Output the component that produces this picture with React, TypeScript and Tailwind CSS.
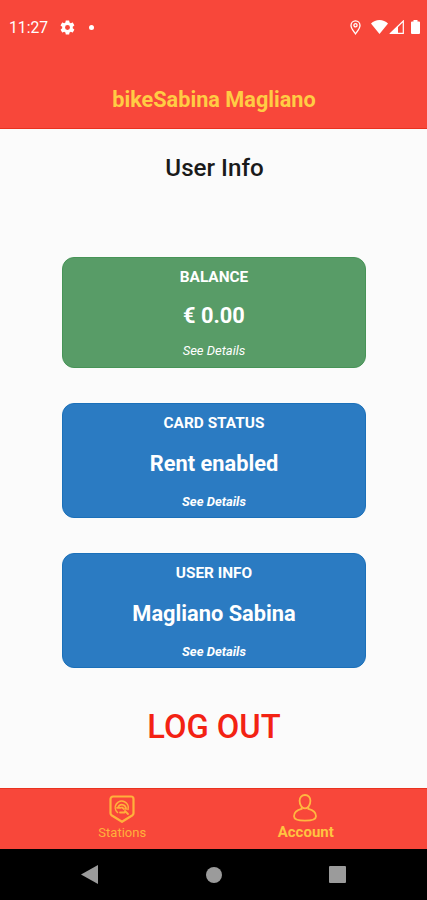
import React from 'react';

interface InfoCardProps {
  label: string;
  value: string;
  variant: 'balance' | 'info';
}

const CARD_STYLES = {
  balance: {
    box: 'h-[111px] bg-[#589c67] border-[#479457]',
    value: 'mt-4',
    details: 'mt-[14px] font-normal',
  },
  info: {
    box: 'h-[115px] bg-[#2b7bc2] border-[#1b70b9]',
    value: 'mt-[18px]',
    details: 'mt-[17px] font-bold',
  },
};

const InfoCard: React.FC<InfoCardProps> = ({ label, value, variant }) => {
  const styles = CARD_STYLES[variant];

  return (
    <button className={`flex w-[304px] flex-col items-center rounded-xl border pt-[9px] text-white ${styles.box}`}>
      <span className="text-[15.4px] leading-5 font-bold">{label}</span>
      <span className={`text-[21.8px] leading-[26px] font-bold ${styles.value}`}>{value}</span>
      <span className={`text-[13px] leading-4 italic ${styles.details}`}>See Details</span>
    </button>
  );
};

const StatusBar: React.FC = () => (
  <div className="flex h-[55px] items-center pl-[9px] pr-[7px] text-white">
    <span className="pt-px text-[15.7px]">11:27</span>
    <svg className="mb-px ml-[11px]" width="17" height="17" viewBox="0 0 24 24" fill="currentColor">
      <path d="M19.4 13c.04-.32.06-.66.06-1s-.02-.68-.07-1l2.1-1.65c.2-.15.25-.42.13-.64l-2-3.46c-.12-.22-.39-.3-.61-.22l-2.49 1a7.3 7.3 0 0 0-1.69-.98l-.38-2.65A.5.5 0 0 0 13.96 2h-4c-.25 0-.46.18-.49.42l-.38 2.65c-.61.25-1.17.59-1.69.98l-2.49-1c-.23-.09-.49 0-.61.22l-2 3.46c-.13.22-.07.49.12.64L4.53 11a8 8 0 0 0 0 2l-2.11 1.65c-.19.15-.24.42-.12.64l2 3.46c.12.22.39.3.61.22l2.49-1c.52.4 1.08.73 1.69.98l.38 2.65c.03.24.24.4.49.4h4c.25 0 .46-.16.49-.4l.38-2.65a7.3 7.3 0 0 0 1.69-.98l2.49 1c.23.09.49 0 .61-.22l2-3.46c.12-.22.07-.49-.12-.64zM12 15.500a3.500 3.500 0 1 1 0-7 3.500 3.500 0 0 1 0 7z" />
    </svg>
    <span className="ml-[13px] h-[5px] w-[5px] rounded-full bg-white" />
    <div className="mb-px ml-auto flex items-center">
      <svg width="11" height="15" viewBox="0 0 11 15" fill="none" stroke="currentColor" strokeWidth="1.3">
        <path d="M5.5 13.8C3.4 11 1 8.200 1 5.400a4.500 4.500 0 0 1 9 0C10 8.200 7.600 11 5.500 13.800z" />
        <circle cx="5.5" cy="5.3" r="1.6" />
      </svg>
      <svg className="ml-[10px]" width="17" height="14" viewBox="0 0 17 14" fill="currentColor">
        <path d="M8.500 14 0 3.500C2.300 1.300 5.200 0 8.500 0S14.700 1.300 17 3.500z" />
      </svg>
      <svg className="ml-px" width="15" height="14" viewBox="0 0 15 14">
        <path d="M1.700 13.300 14.300 1v12.300z" fill="none" stroke="currentColor" strokeWidth="1.200" />
        <path d="M1 13.500 9 5.700v7.800z" fill="currentColor" />
      </svg>
      <svg className="ml-[7px]" width="9" height="14" viewBox="0 0 9 14" fill="currentColor">
        <path d="M2.500 0h4v1.500H8a1 1 0 0 1 1 1V13a1 1 0 0 1-1 1H1a1 1 0 0 1-1-1V2.500a1 1 0 0 1 1-1h1.500z" />
      </svg>
    </div>
  </div>
);

const StationsIcon: React.FC = () => (
  <svg width="26" height="28" viewBox="0 0 26 28" fill="none" stroke="currentColor" strokeLinecap="round" strokeLinejoin="round">
    <path d="M4 1.500h18a2.500 2.500 0 0 1 2.500 2.500v14.200c0 .8-.4 1.500-1 2L13 26.800 2.500 20.200c-.6-.5-1-1.200-1-2V4A2.500 2.500 0 0 1 4 1.500z" strokeWidth="2.200" />
    <path d="M8.500 17.500A6.500 6.500 0 1 1 19 14.500" strokeWidth="1.600" />
    <path d="M9 12.500c1-2.800 3.500-3.500 5.500-2.500 1.500.7 2.500 2 2.500 4M8 12.800h3.500M13 12.500l2 1.500M11 17.500h4.500M16 16l3 3" strokeWidth="1.800" />
  </svg>
);

const AccountIcon: React.FC = () => (
  <svg width="24" height="28" viewBox="0 0 24 28" fill="none" stroke="currentColor" strokeWidth="1.800">
    <path d="M12 1C8.800 1 6.600 3.400 6.600 6.700c0 4 2.200 7.600 5.400 7.600s5.400-3.600 5.400-7.600C17.400 3.400 15.200 1 12 1z" />
    <path d="M8.700 13v1.800C4.500 15.800 1 18.200 1 22.200c0 3.300 4.800 4.500 11 4.500s11-1.200 11-4.500c0-4-3.500-6.400-7.700-7.400V13" />
  </svg>
);

const App: React.FC = () => {
  return (
    <div className="flex h-[900px] w-[427px] flex-col overflow-hidden bg-[#fbfbfb] font-[Roboto,sans-serif]">
      <header className="flex h-[129px] flex-col border-b border-[#e9321f] bg-[#f8473a]">
        <StatusBar />
        <h1 className="mt-[31px] pl-px text-center text-[21.7px] leading-7 font-bold text-[#ffcc44]">bikeSabina Magliano</h1>
      </header>

      <main className="flex flex-1 flex-col items-center pl-px">
        <h2 className="mt-[23px] pl-px text-[24.2px] leading-8 font-medium text-[#1a1a1a]">User Info</h2>
        <div className="mt-[73px] flex flex-col gap-[35px]">
          <InfoCard label="BALANCE" value="€ 0.00" variant="balance" />
          <InfoCard label="CARD STATUS" value="Rent enabled" variant="info" />
          <InfoCard label="USER INFO" value="Magliano Sabina" variant="info" />
        </div>
        <button className="mt-[39px] text-[32.7px] leading-10 font-medium text-[#f32213]">LOG OUT</button>
      </main>

      <nav className="flex h-[61px] justify-around border-t border-[#e9321f] bg-[#f8473a] px-[30px] text-[#ffb13b]">
        <button className="flex w-[100px] flex-col items-center pt-[6px]">
          <StationsIcon />
          <span className="pl-px text-[13px] leading-5">Stations</span>
        </button>
        <button className="flex w-[100px] flex-col items-center pt-[5px] text-[#ffb840]">
          <AccountIcon />
          <span className="pl-px text-[15px] leading-5 font-bold text-[#ffc341]">Account</span>
        </button>
      </nav>

      <div className="flex h-[51px] items-center justify-between bg-black pl-[81px] pr-[81px] text-[#9b9b9b]">
        <svg width="17" height="19" viewBox="0 0 17 19" fill="currentColor">
          <path d="M0 9.500 17 0v19z" />
        </svg>
        <span className="h-4 w-4 rounded-full bg-[#9b9b9b]" />
        <span className="h-[17px] w-[17px] rounded-[1px] bg-[#9b9b9b]" />
      </div>
    </div>
  );
};

export default App;
